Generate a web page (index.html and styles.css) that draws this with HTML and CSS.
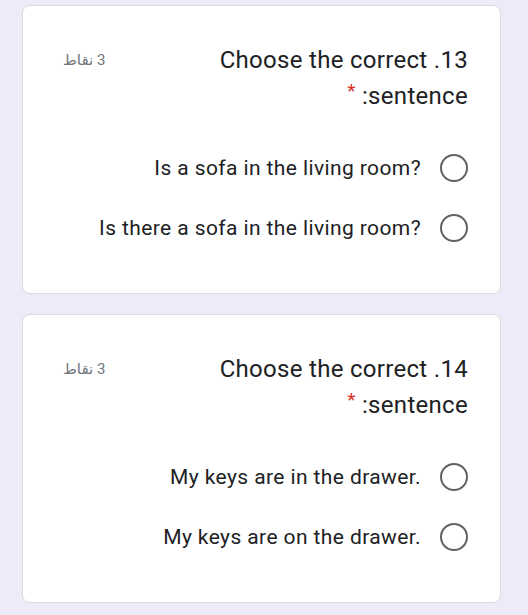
FILE: index.html
```html
<!DOCTYPE html>
<html lang="ar" dir="rtl">
<head>
<meta charset="utf-8">
<link rel="stylesheet" href="styles.css">
</head>
<body>
  <div class="card">
    <div class="head">
      <div class="title">13. Choose the correct<br>sentence: <span class="req">*</span></div>
      <div class="points">3 نقاط</div>
    </div>
    <div class="options">
      <label class="opt"><span class="radio"></span><span class="txt" dir="ltr">Is a sofa in the living room?</span></label>
      <label class="opt"><span class="radio"></span><span class="txt" dir="ltr">Is there a sofa in the living room?</span></label>
    </div>
  </div>
  <div class="card">
    <div class="head">
      <div class="title">14. Choose the correct<br>sentence: <span class="req">*</span></div>
      <div class="points">3 نقاط</div>
    </div>
    <div class="options">
      <label class="opt"><span class="radio"></span><span class="txt" dir="ltr">My keys are in the drawer.</span></label>
      <label class="opt"><span class="radio"></span><span class="txt" dir="ltr">My keys are on the drawer.</span></label>
    </div>
  </div>
</body>
</html>
```
FILE: styles.css
```css
html, body {
  margin: 0;
  padding: 0;
  background: #eeeaf7;
}
body {
  padding: 5px 27px 0 22px;
  font-family: Roboto, "DejaVu Sans", sans-serif;
  color: #202124;
}
.card {
  background: #fff;
  border: 1px solid #dadce0;
  border-radius: 8px;
  padding: 36px 32px 35px 40px;
  margin-bottom: 20px;
  height: 216px;
}
.head {
  display: flex;
  justify-content: space-between;
  align-items: flex-start;
}
.title {
  font-size: 24px;
  line-height: 36px;
  letter-spacing: 0.3px;
}
.req {
  color: #d93025;
  font-size: 19px;
  vertical-align: top;
  line-height: 26px;
}
.points {
  font-size: 15px;
  line-height: 36px;
  color: #70757a;
}
.options {
  margin-top: 24px;
  display: flex;
  flex-direction: column;
}
.opt {
  display: flex;
  align-items: center;
  height: 60px;
  gap: 19px;
}
.radio {
  width: 24px;
  height: 24px;
  border: 2.5px solid #5f6368;
  border-radius: 50%;
  flex: none;
}
.txt {
  font-size: 21px;
  line-height: 28px;
  letter-spacing: 0.4px;
}
```
